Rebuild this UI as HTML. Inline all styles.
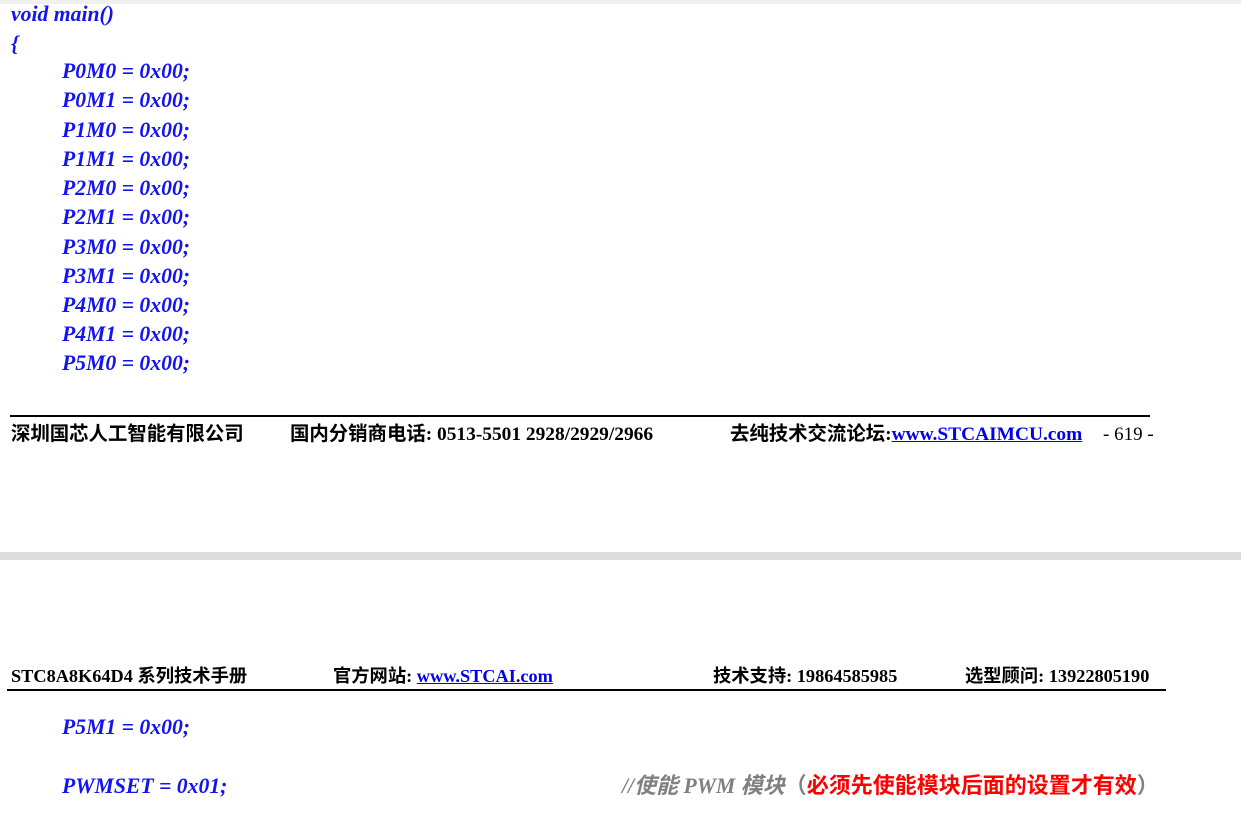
<!DOCTYPE html>
<html><head><meta charset="utf-8"><style>
body{margin:0;width:1241px;height:817px;background:#fff;position:relative;overflow:hidden;font-family:"Liberation Serif","Noto Serif CJK SC",serif}
.c{position:absolute;left:62px;color:#1414f0;font-weight:bold;font-style:italic;font-size:21.7px;line-height:24px;white-space:nowrap}
.f{position:absolute;font-weight:bold;font-size:19.4px;line-height:20px;white-space:nowrap;color:#000;font-family:"Liberation Serif","Noto Sans CJK SC",serif}
.h{font-size:18.3px}
a{color:#0000ee;text-decoration:underline}
</style></head><body>
<div style="position:absolute;left:0;top:0;width:1241px;height:4px;background:#f0f0f0"></div>
<div class="c" style="left:11px;top:2px">void main()</div>
<div class="c" style="left:11px;top:32px">{</div>
<div class="c" style="top:59px">P0M0 = 0x00;</div>
<div class="c" style="top:88px">P0M1 = 0x00;</div>
<div class="c" style="top:118px">P1M0 = 0x00;</div>
<div class="c" style="top:147px">P1M1 = 0x00;</div>
<div class="c" style="top:176px">P2M0 = 0x00;</div>
<div class="c" style="top:205px">P2M1 = 0x00;</div>
<div class="c" style="top:235px">P3M0 = 0x00;</div>
<div class="c" style="top:264px">P3M1 = 0x00;</div>
<div class="c" style="top:293px">P4M0 = 0x00;</div>
<div class="c" style="top:322px">P4M1 = 0x00;</div>
<div class="c" style="top:351px">P5M0 = 0x00;</div>
<div style="position:absolute;left:10px;top:415px;width:1140px;height:2px;background:#000"></div>
<div class="f" style="left:11px;top:425px">深圳国芯人工智能有限公司</div>
<div class="f" style="left:290px;top:425px">国内分销商电话: 0513-5501 2928/2929/2966</div>
<div class="f" style="left:730px;top:425px">去纯技术交流论坛:<a>www.STCAIMCU.com</a></div>
<div class="f" style="left:1103px;top:425px;font-weight:normal;font-size:19px">- 619 -</div>
<div style="position:absolute;left:0;top:552px;width:1241px;height:8px;background:#dcdcdc"></div>
<div class="f h" style="left:11px;top:666px">STC8A8K64D4 系列技术手册</div>
<div class="f h" style="left:333px;top:666px">官方网站: <a>www.STCAI.com</a></div>
<div class="f h" style="left:713px;top:666px">技术支持: 19864585985</div>
<div class="f h" style="left:965px;top:666px">选型顾问: 13922805190</div>
<div style="position:absolute;left:7px;top:689px;width:1159px;height:2px;background:#000"></div>
<div class="c" style="top:715px">P5M1 = 0x00;</div>
<div class="c" style="top:774px">PWMSET = 0x01;</div>
<div class="c" style="left:622px;top:774px;color:#808080;font-family:'Liberation Serif','Noto Sans CJK SC',serif">//<span style="font-size:22px">使能</span> PWM <span style="font-size:22px">模块</span><span style="font-style:normal;font-size:22px">（</span><span style="color:#f00;font-style:normal;font-size:22px">必须先使能模块后面的设置才有效</span><span style="font-style:normal;font-size:22px">）</span></div>
</body></html>
